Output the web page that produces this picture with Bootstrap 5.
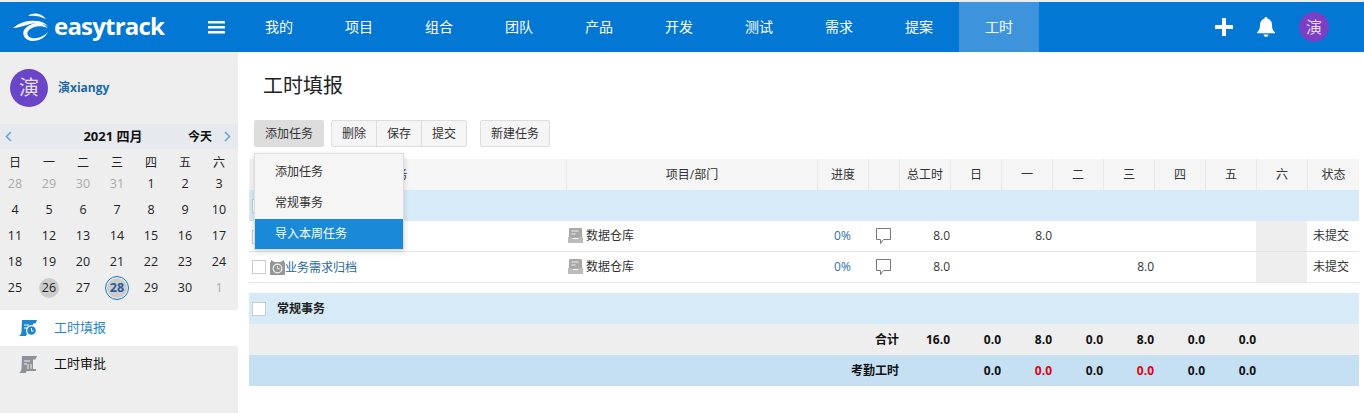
<!DOCTYPE html>
<html lang="zh">
<head>
<meta charset="utf-8">
<title>工时填报</title>
<link href="https://cdn.jsdelivr.net/npm/bootstrap@5.3.0/dist/css/bootstrap.min.css" rel="stylesheet">
<style>
html,body{height:413px;overflow:hidden}
body{background:#e8eef3;padding-top:2px;font:12px/1.5 "Open Sans","Noto Sans CJK SC",sans-serif;color:#333}
.et-top{height:50px;background:#0277d4;color:#fff}
.et-logo{width:202px;padding-left:13px}
.et-logo-text{font:700 24px/1 "Open Sans",sans-serif;letter-spacing:-.8px;margin-left:3px;margin-top:-2px}
.et-burger{width:37px;padding-left:6px}
.et-nav-item{width:80px;color:#fff;font-size:14px;line-height:50px;text-align:center;text-decoration:none}
.et-nav-item.et-on{background:#3d94dc}
.et-right{margin-left:auto;padding-right:35px}
.et-ava-s{width:30px;height:30px;border-radius:50%;background:#7a3fc4;color:#e8d6fa;font-size:16px}
.et-body{height:361px;background:#fff}
.et-side{width:238px;background:#eee;flex:none}
.et-user{height:72px;padding-left:10px}
.et-ava{width:38px;height:38px;border-radius:50%;background:#6a45c8;color:#e9def8;font-size:20px}
.et-uname{color:#1a6aa8;font-weight:700;margin-left:10px;font-size:12px}
.et-cal-head{height:25px;background:#e6e9ed;color:#111;font-size:12px}
.et-cal-arrow{width:16px;display:flex;justify-content:center}
.et-cal-title{font-weight:700;font-size:13px;width:110px;margin-left:42px;text-align:center}
.et-cal-today{font-weight:600;margin-left:auto;margin-right:7px}
.et-cal-next{margin-right:3px}
.et-grid{display:grid;grid-template-columns:repeat(7,34px);margin-left:-2px;text-align:center;color:#222;padding-top:5px}
.et-grid>span{height:26px;line-height:26px;font-size:12.5px;display:flex;align-items:center;justify-content:center}
.et-grid>.et-wk{height:17px;line-height:17px;font-size:12px}
.et-grid>.et-off{color:#aaa}
.et-d{width:20px;height:20px;border-radius:50%}
.et-d26{background:#ccc}
.et-d28{width:24px;height:24px;background:#ccc;border:1px solid #1e7fc4;color:#2a5a9a;font-weight:700;box-shadow:inset 0 0 0 1px #eee}
.et-menu-row{height:36px;font-size:13px;color:#111;padding-left:19px}
.et-menu-row.et-cur{background:#fff;color:#2a86c6;margin-top:9px}
.et-menu-row span{margin-left:17px}
.et-main{flex:1;position:relative;padding:0 5px 0 11px}
.et-title{font-size:20px;font-weight:400;color:#222;margin:19px 0 0 15px;line-height:30px;height:30px;margin-left:14px}
.et-tools{margin:19px 0 12px 5px;height:27px}
.et-btn{height:27px;line-height:24px;padding:1px 0 0;border:1px solid #ddd;background:#f5f5f5;color:#333;font-size:12px;border-radius:2px}
.et-btn:hover{background:#f5f5f5;color:#333;border-color:#ddd}
.et-btn.et-add,.et-btn.et-add:hover{width:70px;background:#ddd;border-color:#ddd}
.et-btn-g{width:46px}
.et-gp{margin-left:7px}
.et-new{width:70px;margin-left:13px}
.et-pop{display:block;position:absolute;left:16px;top:101px;width:150px;min-width:0;padding:3px 0 0;background:#f5f5f5;border:1px solid #ddd;border-radius:0;box-shadow:0 2px 6px rgba(0,0,0,.15);z-index:5;margin:0}
.et-pop .dropdown-item{height:31px;line-height:30px;padding:0 0 0 20px;font-size:12px;color:#333}
.et-pop .dropdown-item.active{background:#1a8ad8;color:#fff;height:30px;line-height:30px}
.et-table{table-layout:fixed;width:1110px;border-collapse:separate;border-spacing:0;font-size:12px;color:#333}
.et-c1{width:317px}.et-c2{width:251px}.et-c3{width:51px}.et-c4{width:31px}.et-c5{width:51px}.et-c6{width:52px}
.et-table td,.et-table th{height:31px;padding:0;vertical-align:middle;font-weight:400;border:0}
.et-table thead th{background:#f5f5f5;text-align:center;border-left:1px solid #e9e9e9}
.et-table thead th.et-th-name{padding-right:24px;border-left:0}
.et-table tbody tr.et-row td{border-bottom:1px solid #e5e5e5;background:#fff}
.et-table tr.et-grp td{background:#d6eaf8;font-weight:700;color:#222}
.et-table tr.et-gap td{height:10px;background:#fff}
.et-table tr.et-sum td{background:#eee;font-weight:700;color:#111;text-align:right}
.et-table tr.et-att td{background:#c5dff3;font-weight:700;color:#111;text-align:right}
.et-table tr.et-att td.et-red{color:#e60012}
.et-table tr.et-row td.et-r{text-align:right}
.et-table tr.et-row td.et-c{text-align:center}
.et-table tr.et-row td.et-sat{background:#eee}
.et-pct{color:#2a6ea8}
.et-check{display:inline-block;width:14px;height:14px;background:#fff;border:1px solid #ccc;vertical-align:middle;margin:0 4px 0 3px}
.et-task{color:#1f6a9e;text-decoration:none;vertical-align:middle}
.et-pad{padding-left:6px!important}
.et-table tr.et-grp .et-gname{margin-left:7px;vertical-align:middle}
.et-proj{margin:0 3px 0 2px;vertical-align:-3px}
</style>
</head>
<body>
<div class="et-top d-flex align-items-center">
  <div class="et-logo d-flex align-items-center">
    <svg width="38" height="30" viewBox="0 0 38 30" fill="#fff" aria-hidden="true"><path d="M15 4C20 0 28 1 33 7 27 4 21 3 15 4z"/><path d="M0 16C6 11 14 8 22 9c6 0 10 2 13 5-7-3-15-3-21-1-5 1-10 3-14 3z"/><path d="M35 16c-7-3-15-2-19 2-3 3-2 7 3 8 6 1 12-2 16-6-3 6-9 9-16 9-8-1-10-7-8-11 4-5 9-7 14-7 4 0 7 2 10 5z"/></svg>
    <span class="et-logo-text">easytrack</span>
  </div>
  <div class="et-burger d-flex"><svg width="17" height="13" viewBox="0 0 17 13" fill="#fff" aria-hidden="true"><rect width="17" height="2.6" rx=".6" y="0"/><rect width="17" height="2.6" rx=".6" y="5"/><rect width="17" height="2.6" rx=".6" y="10"/></svg></div>
  <a class="et-nav-item" href="#">我的</a><a class="et-nav-item" href="#">项目</a><a class="et-nav-item" href="#">组合</a><a class="et-nav-item" href="#">团队</a><a class="et-nav-item" href="#">产品</a><a class="et-nav-item" href="#">开发</a><a class="et-nav-item" href="#">测试</a><a class="et-nav-item" href="#">需求</a><a class="et-nav-item" href="#">提案</a><a class="et-nav-item et-on" href="#">工时</a>
  <div class="et-right d-flex align-items-center gap-4">
    <svg width="18" height="18" viewBox="0 0 18 18" fill="#fff" aria-hidden="true"><rect x="7" width="4" height="18" rx=".5"/><rect y="7" width="18" height="4" rx=".5"/></svg>
    <svg width="18" height="20" viewBox="0 0 18 20" fill="#fff" aria-hidden="true"><path d="M9 0c1 0 1.500.7 1.500 1.500C13.500 2.200 15 5 15 8c0 4 1 5.500 3 7.500v.7H0v-.7C2 13.500 3 12 3 8c0-3 1.500-5.800 4.500-6.500C7.500.7 8 0 9 0z"/><path d="M6.500 17.500h5c-.3 1.400-1.200 2.300-2.500 2.300s-2.200-.9-2.500-2.300z"/></svg>
    <div class="et-ava-s d-flex align-items-center justify-content-center">演</div>
  </div>
</div>
<div class="et-body d-flex">
  <aside class="et-side">
    <div class="et-user d-flex align-items-center">
      <div class="et-ava d-flex align-items-center justify-content-center">演</div>
      <span class="et-uname">演xiangy</span>
    </div>
    <div class="et-cal-head d-flex align-items-center">
      <span class="et-cal-arrow"><svg width="7" height="11" viewBox="0 0 7 11" fill="none" stroke="#6aa6d2" stroke-width="1.600" aria-hidden="true"><path d="M6 1L1.500 5.500 6 10"/></svg></span>
      <span class="et-cal-title">2021 四月</span>
      <span class="et-cal-today">今天</span>
      <span class="et-cal-arrow et-cal-next"><svg width="7" height="11" viewBox="0 0 7 11" fill="none" stroke="#6aa6d2" stroke-width="1.600" aria-hidden="true"><path d="M1 1l4.500 4.500L1 10"/></svg></span>
    </div>
    <div class="et-grid">
      <span class="et-wk">日</span><span class="et-wk">一</span><span class="et-wk">二</span><span class="et-wk">三</span><span class="et-wk">四</span><span class="et-wk">五</span><span class="et-wk">六</span>
      <span class="et-off">28</span><span class="et-off">29</span><span class="et-off">30</span><span class="et-off">31</span><span>1</span><span>2</span><span>3</span>
      <span>4</span><span>5</span><span>6</span><span>7</span><span>8</span><span>9</span><span>10</span>
      <span>11</span><span>12</span><span>13</span><span>14</span><span>15</span><span>16</span><span>17</span>
      <span>18</span><span>19</span><span>20</span><span>21</span><span>22</span><span>23</span><span>24</span>
      <span>25</span><span><i class="et-d et-d26 d-flex align-items-center justify-content-center fst-normal">26</i></span><span>27</span><span><i class="et-d et-d28 d-flex align-items-center justify-content-center fst-normal">28</i></span><span>29</span><span>30</span><span class="et-off">1</span>
    </div>
    <div class="et-menu-row et-cur d-flex align-items-center">
      <svg width="18" height="16" viewBox="0 0 18 16" aria-hidden="true"><path d="M3 0h15l-1.500 3.500H14V10H8v4.500H7.500L7 16H0c1.500-1 2.500-2.500 2.500-5z" fill="#1f86cc"/><path d="M5 5h5M5 8h3" stroke="#fff"/><circle cx="12.500" cy="10.500" r="5.500" fill="#fff"/><circle cx="12.500" cy="10.500" r="4.300" fill="#1f86cc"/><path d="M12.500 8v3h2.200" stroke="#fff" fill="none"/></svg>
      <span>工时填报</span>
    </div>
    <div class="et-menu-row d-flex align-items-center">
      <svg width="18" height="17" viewBox="0 0 18 17" aria-hidden="true"><path d="M3 0h15l-1.500 3.500H14V13h3v2H7.500L7 17H0c1.500-1 2.500-2.500 2.500-5z" fill="#8d9299"/><path d="M5 5h6M5 8h3M9 8v5M12 8v5" stroke="#eee" fill="none"/></svg>
      <span>工时审批</span>
    </div>
  </aside>
  <main class="et-main">
    <h1 class="et-title">工时填报</h1>
    <div class="et-tools d-flex">
      <button type="button" class="btn et-btn et-add">添加任务</button>
      <div class="btn-group et-gp">
        <button type="button" class="btn et-btn et-btn-g">删除</button>
        <button type="button" class="btn et-btn et-btn-g">保存</button>
        <button type="button" class="btn et-btn et-btn-g">提交</button>
      </div>
      <button type="button" class="btn et-btn et-new">新建任务</button>
    </div>
    <ul class="dropdown-menu et-pop">
      <li><a class="dropdown-item" href="#">添加任务</a></li>
      <li><a class="dropdown-item" href="#">常规事务</a></li>
      <li><a class="dropdown-item active" href="#">导入本周任务</a></li>
    </ul>
    <table class="et-table">
      <colgroup><col class="et-c1"><col class="et-c2"><col class="et-c3"><col class="et-c4"><col span="8" class="et-c5"><col class="et-c6"></colgroup>
      <thead><tr><th class="et-th-name">任务</th><th>项目/部门</th><th>进度</th><th></th><th>总工时</th><th>日</th><th>一</th><th>二</th><th>三</th><th>四</th><th>五</th><th>六</th><th>状态</th></tr></thead>
      <tbody>
        <tr class="et-grp"><td colspan="13"><span class="et-check"></span></td></tr>
        <tr class="et-row"><td><span class="et-check"></span></td><td><svg width="15" height="15" viewBox="0 0 15 15" class="et-proj" aria-hidden="true"><path d="M2 0h11a1 1 0 011 1v9H1V1a1 1 0 011-1z" fill="#a8a8a8"/><path d="M0 9h4l1 2h5l1-2h4v6H0z" fill="#bbb"/><path d="M3.500 3h7M3.500 6h4" stroke="#eee"/></svg>数据仓库</td><td class="et-c et-pct">0%</td><td class="et-c"><svg width="15" height="17" viewBox="0 0 15 17" fill="none" stroke="#777" aria-hidden="true"><path d="M.5 .5h14v11H7.500l-3 4v-4h-4z"/></svg></td><td class="et-r">8.0</td><td></td><td class="et-r">8.0</td><td></td><td></td><td></td><td></td><td class="et-sat"></td><td class="et-pad">未提交</td></tr>
        <tr class="et-row"><td><span class="et-check"></span><svg width="15" height="15" viewBox="0 0 15 15" class="align-middle" aria-hidden="true"><path d="M1 0l3 2-3 3zM14 0l-3 2 3 3z" fill="#888"/><rect y="2" x="0" width="15" height="13" rx="1" fill="#969696"/><circle cx="7.500" cy="8.500" r="4.300" fill="none" stroke="#f2f2f2" stroke-width="1.200"/><path d="M7.500 6v2.700h2.200" stroke="#f2f2f2" fill="none"/></svg><a class="et-task" href="#">业务需求归档</a></td><td><svg width="15" height="15" viewBox="0 0 15 15" class="et-proj" aria-hidden="true"><path d="M2 0h11a1 1 0 011 1v9H1V1a1 1 0 011-1z" fill="#a8a8a8"/><path d="M0 9h4l1 2h5l1-2h4v6H0z" fill="#bbb"/><path d="M3.500 3h7M3.500 6h4" stroke="#eee"/></svg>数据仓库</td><td class="et-c et-pct">0%</td><td class="et-c"><svg width="15" height="17" viewBox="0 0 15 17" fill="none" stroke="#777" aria-hidden="true"><path d="M.5 .5h14v11H7.500l-3 4v-4h-4z"/></svg></td><td class="et-r">8.0</td><td></td><td></td><td></td><td class="et-r">8.0</td><td></td><td></td><td class="et-sat"></td><td class="et-pad">未提交</td></tr>
        <tr class="et-gap"><td colspan="13"></td></tr>
        <tr class="et-grp"><td colspan="13"><span class="et-check"></span><span class="et-gname">常规事务</span></td></tr>
        <tr class="et-sum"><td colspan="4">合计</td><td>16.0</td><td>0.0</td><td>8.0</td><td>0.0</td><td>8.0</td><td>0.0</td><td>0.0</td><td></td><td></td></tr>
        <tr class="et-att"><td colspan="4">考勤工时</td><td></td><td>0.0</td><td class="et-red">0.0</td><td>0.0</td><td class="et-red">0.0</td><td>0.0</td><td>0.0</td><td></td><td></td></tr>
      </tbody>
    </table>
  </main>
</div>
</body>
</html>
